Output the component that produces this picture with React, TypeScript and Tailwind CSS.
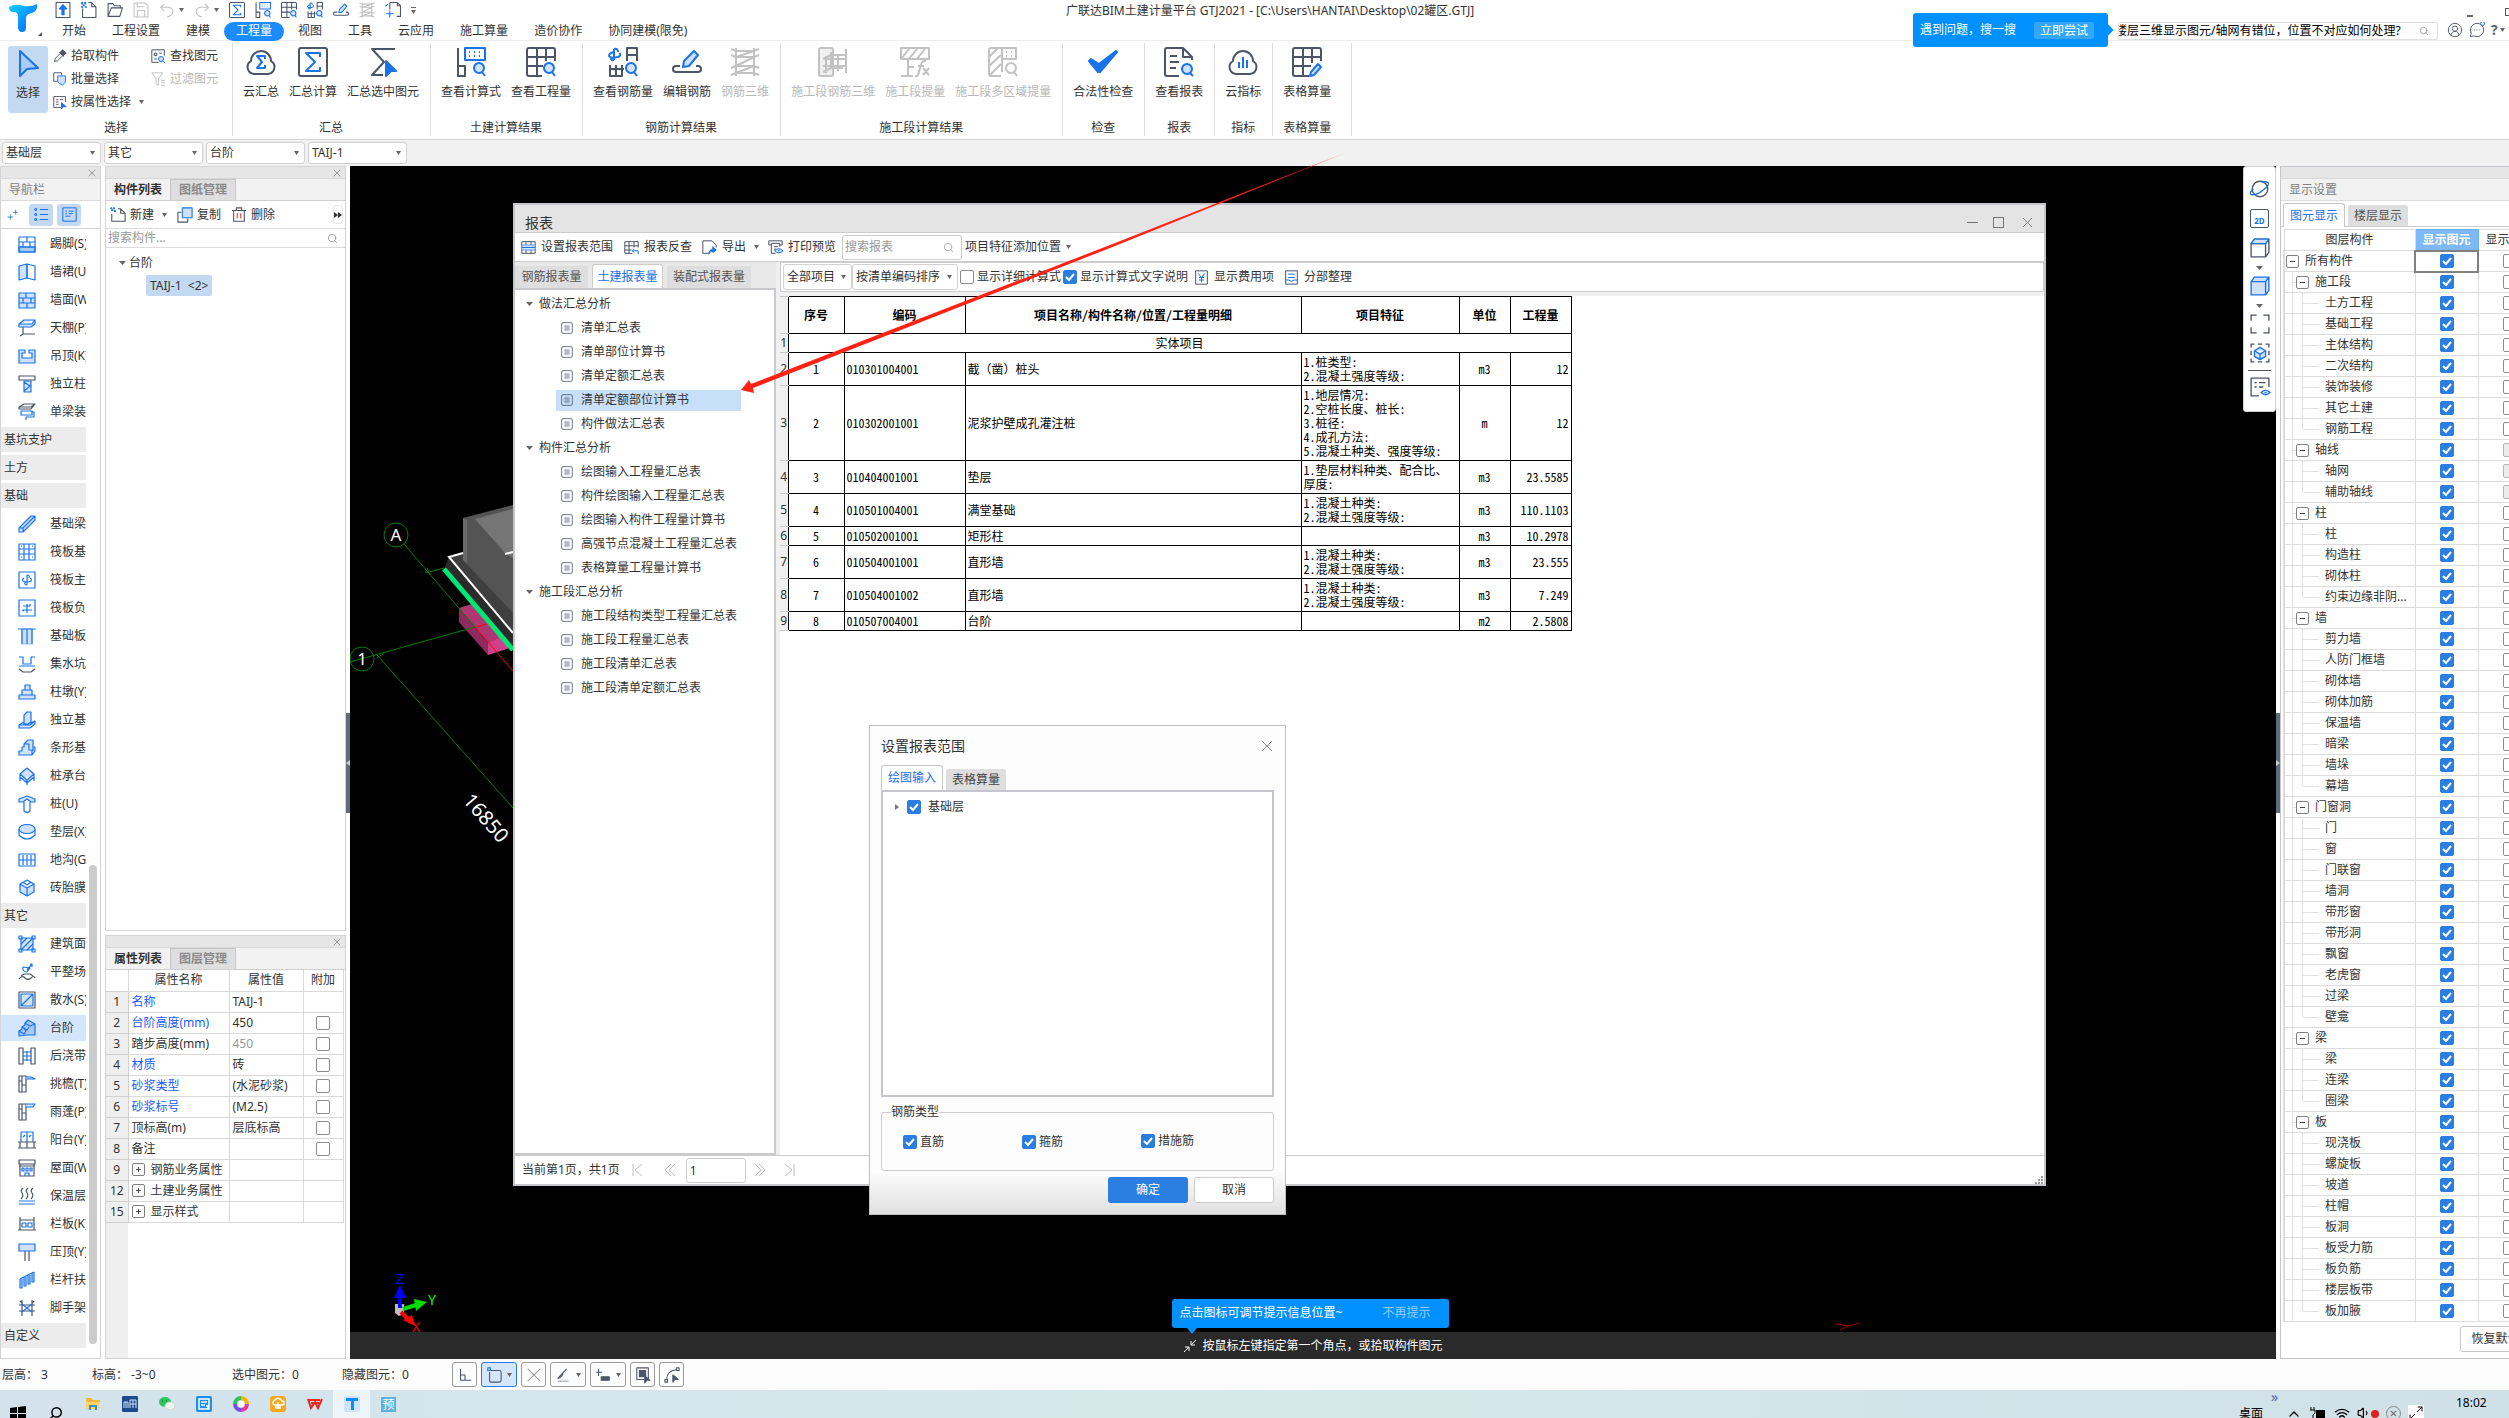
import type { ReactNode } from "react";
import clsx from "clsx";
import { ChevronUp, CircleUserRound, Maximize2, MessageCircleMore, Search, Volume1, Wifi, X } from "lucide-react";

const G = "#4c5468";
const B = "#1a73e8";
const F = "#cfe1fb";
const L = "#c2c2c2";
const N = "none";

// [path, stroke, fill]
type Layer = [string, string, string];

const ribbonIcons: Record<string, Layer[]> = {
  cloudSum: [
    ["M8 27A7 7 0 0 1 5 14A10 10 0 0 1 25 14A7 7 0 0 1 22 27Z", G, N],
    ["M19 12V9H11L16 15L11 21H19V18", B, N],
  ],
  sum: [
    ["M3 1H27Q29 1 29 3V27Q29 29 27 29H3Q1 29 1 27V3Q1 1 3 1Z", G, N],
    ["M22 10V6H8L17 15L8 24H22V20", B, N],
  ],
  sumPick: [
    ["M27 2H4L16 15L4 28H15", G, N],
    ["M18 14L28 24H23L18 29Z", B, B],
  ],
  formula: [
    ["M2 1V19H9V29H2V19", G, N],
    ["M9 1H29V13H9ZM13 5h1M18 5h1M23 5h1M13 9h1M18 9h1M23 9h1", B, N],
    ["M18 21A5 5 0 1 0 28 21A5 5 0 1 0 18 21M26 25L29 29", B, F],
  ],
  gridFind: [
    ["M16 29H3Q1 29 1 27V3Q1 1 3 1H27Q29 1 29 3V14M1 10H29M1 19H17M11 1V29M20 1V14", G, N],
    ["M18 21A5 5 0 1 0 28 21A5 5 0 1 0 18 21M26 25L29 29", B, F],
  ],
  rebarFind: [
    ["M19 14V1H29V14M19 8H29M2 18V29H14V18M2 22H16M8 18V29", G, N],
    ["M6 5Q1 6 1 9Q3 12 10 10Q13 9 12 6M6 2V13M6 2Q10 1 10 5M6 13Q3 14 3 11", B, N],
    ["M18 21A5 5 0 1 0 28 21A5 5 0 1 0 18 21M26 25L29 29", B, F],
  ],
  rebarEdit: [
    ["M8 19H4A3 3 0 0 0 4 25H26A3 3 0 0 0 26 19H24", G, N],
    ["M11 20L12 14L22 4L26 8L17 19Z", B, F],
  ],
  rebar3d: [["M6 1V29M24 1V29M1 2L6 4H24L29 2M1 8L6 10H24L29 8M1 21L6 19H24L29 21M1 28L6 26H24L29 28M6 10L24 4M6 19L24 10M6 26L24 19", L, N]],
  segRebar: [
    ["M3 1H13Q15 1 15 3V27Q15 29 13 29H3Q1 29 1 27V3Q1 1 3 1Z", L, "#f0f0f0"],
    ["M8 9V26M13 5V22M28 2V26M5 12H29M5 19H29M5 12L13 8H29M5 25L13 21H25M20 8V24", L, N],
  ],
  segFx: [
    ["M1 1H29V12H1ZM1 12L9 2M9 12L17 2M17 12L25 2M8 12V29M1 29H13M8 20H14", L, N],
    ["M26 14Q22 13 21 18L18 28Q17 30 15 29M18 19H24M23 21L29 28M29 21L23 28", L, N],
  ],
  segArea: [
    ["M13 29H3Q1 29 1 27V3Q1 1 3 1H28V12H14V1M14 12V25M1 10L10 1M1 19L13 8M2 28L13 17M18 5h1M23 5h1M18 9h1M23 9h1", L, N],
    ["M18 21A5 5 0 1 0 28 21A5 5 0 1 0 18 21M26 25L29 29", L, N],
  ],
  check: [["M1 14L3 12L11 17L28 4L29 5L12 25H10Z", B, B]],
  report: [
    ["M15 29H3Q1 29 1 27V3Q1 1 3 1H19L28 10V13M19 1V10H28M6 9H13M6 15H15M6 21H12", G, N],
    ["M18 22A5 5 0 1 0 28 22A5 5 0 1 0 18 22M26 26L29 29", B, F],
  ],
  cloudIdx: [
    ["M8 27A7 7 0 0 1 5 14A10 10 0 0 1 25 14A7 7 0 0 1 22 27Z", G, N],
    ["M11 15V21M15 10V21M19 13V21", B, N],
  ],
  gridEdit: [
    ["M17 29H3Q1 29 1 27V3Q1 1 3 1H27Q29 1 29 3V14M1 10H29M1 19H19M11 1V29M20 1V16", G, N],
    ["M18 29L19 25L26 17L29 20L22 28Z", B, F],
  ],
  upload: [
    ["M2 1H28V29H2Z", G, N],
    ["M15 5L22 13H17V24H13V13H8Z", B, B],
  ],
  newDoc: [
    ["M14 1H20L28 9V29H3V12M20 1V9H28", G, N],
    ["M1 1h2v2h-2zM7 1h2v2h-2zM4 5h2v2h-2zM1 9h2v1h-2zM8 9h2v1h-2z", B, B],
  ],
  folder: [["M2 27V3H11L14 7H25V11M2 27L8 11H29L24 27Z", G, N]],
  save: [["M2 2H23L28 7V28H2ZM8 28V16H22V28M8 2V9H20", L, N]],
  undo: [["M10 4L3 10L10 17M4 10H17Q27 11 26 19Q25 26 15 28", L, N]],
  redo: [["M20 4L27 10L20 17M26 10H13Q3 11 4 19Q5 26 15 28", L, N]],
  docPlus: [
    ["M9 1H23L29 7V27H22M9 1V14M23 1V7H29", G, N],
    ["M9 16V29M2 22H16M1 8L5 4", B, N],
  ],
};

const smallIcons: Record<string, Layer[]> = {
  skirt: [["M1 12H17V17H1Z", B, "#a9c9f3"], ["M1 2H17V17H1ZM1 7H17M1 12H17M9 2V7M5 7V12M12 7V12", B, N]],
  dado: [["M1 3L9 1V15L1 17Z", B, F], ["M9 1L17 3V17L9 15Z", B, N]],
  wallFace: [["M1 2H17V17H1ZM1 7H17M1 12H17M8 2V7M5 7V12M13 7V12M9 12V17", B, F]],
  canopy: [["M5 8V15M2 17L5 15H17", G, N], ["M1 5L6 1H17L14 5ZM1 5V8H13L17 5V1", B, F]],
  ceiling: [["M1 3H7V6H4V11H14V6H11V3H17V16H1Z", B, F]],
  column: [["M1 1H17V5H1Z", G, N], ["M6 6H13V17H6ZM6 7L12 11L6 16", B, F]],
  beamDeco: [["M1 4L6 1H17L13 4ZM1 4V6H13L17 1", G, N], ["M3 8H14V12H3ZM14 9H16V14H8V17", B, N]],
  fBeam: [["M1 13L13 1H17V5L5 17H1ZM1 13H5V17M5 13L17 1", B, F]],
  raft: [["M1 1H17V17H1ZM1 6H17M1 11H17M6 1V17M11 1V17M3 3h1M14 3h1M3 14h1M14 14h1", B, N]],
  raftMain: [["M1 1H17V17H1ZM9 4V14M6 7Q4 8 5 10Q9 12 13 10Q14 8 12 7M9 4Q12 4 11 7M9 14Q6 14 7 11", B, N]],
  raftNeg: [["M1 1H17V17H1ZM5 7H12V5M5 11H14M9 5V14M4 11L6 12", B, N]],
  fBand: [["M4 2H14V17H4Z", "#9fc3f3", F], ["M0 2H18M4 2V17M9 2V17M14 2V17", B, N]],
  pit: [["M1 2H5V9H13V2H17M1 11H17", B, N], ["M1 14L5 17H13L17 14", G, N]],
  pier: [["M7 2H12V7H7ZM4 7H14V12H4ZM1 12H17V16H1Z", B, F]],
  isoBase: [["M6 4L9 1H13V11L10 13H6ZM1 14L6 11M10 13L17 10V13L12 17H1V14H12L17 10", B, F]],
  strip: [["M6 5L10 1H15V12M6 5H11V11H14V16H1V12H4V8H6ZM14 16L17 12V8H15", B, F]],
  cap: [["M9 1L16 7L9 13L2 7ZM2 7V14M16 7V14M9 13V18M2 10L9 16L16 10", B, F]],
  pile: [["M1 4L9 1L17 4V7H13L9 4L5 7H1Z", B, F], ["M6 7V16Q9 19 12 16V7", B, N]],
  cushion: [["M1 6V12Q9 20 17 12V6", B, N], ["M1 6A8 4.500 0 1 0 17 6A8 4.500 0 1 0 1 6", B, F]],
  trench: [["M1 3H17V15H1ZM1 9H17M5 4V14M9 4V14M13 4V14", B, N]],
  brick: [["M9 1L16 5V13L9 17L2 13V5ZM2 5L9 9L16 5M9 9V17M5 3L9 6L13 3", B, F]],
  area: [["M3 3H15V15H3Z", B, F], ["M3 9L9 3M3 15L15 3M9 15L15 9M1 1H4V4H1ZM14 1H17V4H14ZM1 14H4V17H1ZM14 14H17V17H14Z", B, N]],
  level: [["M5 4Q4 9 9 9L12 5ZM9 7L14 1M12 1H14V4", B, N], ["M1 16Q4 12 7 15T13 15T17 15M3 13L6 11H12L15 13", G, N]],
  apron: [["M1 1H17V17H1Z", G, N], ["M3 3H15V15H3ZM3 15L15 3", B, F]],
  stairs: [["M1 12L4 10V8L7 6V4L10 1L17 5V16H8L1 17Z", B, "#a9c9f3"], ["M1 12L6 15L8 12L6 9M4 8L9 11L11 8M7 4L12 7L17 5", B, N]],
  lateStrip: [["M1 1H5V17H1ZM13 1H17V17H13Z", G, N], ["M5 5H13M5 9H13M5 13H13M9 4V14", B, N]],
  eave: [["M1 1H8V17H1ZM1 6H4M4 1V17M4 10H8", G, N], ["M8 2H13L17 4H8", B, F]],
  awning: [["M1 1H8V17H1ZM1 6H4M4 1V17M4 10H8", G, N], ["M8 1H17L15 4H8", B, F]],
  balcony: [["M0 11H18M2 11V17H16V11M9 11V17M0 17H18", G, N], ["M3 1H15V11M9 1V11M3 1V11M5 6L7 4M11 6L13 4", B, N]],
  roof: [["M1 1H17V5H1ZM2 5V17H16V5M1 7H17", G, N], ["M4 9H6V12H4ZM8 9H10V12H8ZM12 9H14V12H12ZM7 17V14H11V17", B, N]],
  heat: [["M5 1Q2 3 4 6T3 12M10 1Q7 3 9 6T8 12M15 1Q12 3 14 6T13 12", G, N], ["M1 14H17M1 17H17", B, N]],
  parapet: [["M2 2V15M16 2V15M0 15H18M2 5H16", G, N], ["M4 8H8V12H4ZM10 8H14V12H10Z", B, N]],
  coping: [["M7 8V18M11 8V18", G, N], ["M1 1H17V8H1Z", B, F]],
  rail: [["M2 8L16 1M2 8V17H4V8M6 6V15H8V6M10 4V13H12V4M14 2V11H16V1", B, F]],
  scaffold: [["M4 1V17M14 1V17M1 6H17M1 12H17M2 2L4 4M16 2L14 4", G, N], ["M4 5L14 13M14 5L4 13", B, N]],
  pick: [["M10 5L13 8L6 15L2 16L3 12Z", G, N], ["M12 1L17 5L13 9L9 5ZM8 4L14 10", G, G]],
  batch: [["M1 1H11V4M1 1V12H5", G, N], ["M7 5H16V13L12 17L6 13V5Z", B, F]],
  byAttr: [["M10 16H1V2H16V9M4 6H7M9 6H13M4 9H7M4 12H7", G, N], ["M11 10L17 15H13L11 18Z", B, B]],
  findEl: [["M9 16H1V1H16V8M4 5H7V8H4ZM10 5H13M4 12H7", G, N], ["M9 12A3 3 0 1 0 15 12A3 3 0 1 0 9 12M14 14L17 17", B, F]],
  filter: [["M1 1H14L9 8V16L6 14V8ZM12 10H17M12 13H17M12 16H17", L, N]],
  range: [["M1 2H17V16H1ZM6 2V16M12 2V16", G, N], ["M1 6H17V12H1Z", "#5a9bf0", F], ["M1 9H17", B, N]],
  trace: [["M10 16H1V2H17V9M1 7H17M1 12H9M6 2V16M12 2V9", G, N], ["M17 17V13H10M12 11L10 13L12 15", B, N]],
  exportIc: [["M8 16H1V1H12L17 6V9", G, N], ["M8 17Q9 11 13 11V8L17 12L13 15V13Q10 13 8 17", B, B]],
  print: [["M1 6V1H17V6H13M1 6H4M4 4H14V8M4 4V16H9M7 8H12M7 11H10", G, N], ["M8 13Q13 8 18 13Q13 18 8 13ZM12 13h2", B, F]],
  doc: [["M3 1H15Q17 1 17 3V15Q17 17 15 17H3Q1 17 1 15V3Q1 1 3 1ZM5 6H13M5 9H13M5 12H13", G, N]],
  fee: [["M2 1H16V17H2Z", G, N], ["M5 4L9 9L13 4M9 9V15M6 9H12M6 12H12", B, N]],
  arrange: [["M2 1H16V17H2Z", G, N], ["M5 5H13M5 9H13M2 12H6Q9 15 12 12H16", B, N]],
  newItem: [["M9 2H12L17 7V16H2V8M12 2V7H17", G, N], ["M1 1h1v1h-1zM4 1h1v1h-1zM2 3h1v1h-1zM5 4h1v1h-1z", B, B]],
  copy: [["M5 6H1V17H12V13", G, N], ["M6 1H17V12H6Z", B, F]],
  trash: [["M3 4V16H15V4M1 4H17M6 4V1H12V4", G, N], ["M7 7V13M11 7V13", "#e03030", N]],
  stars: [["M5 8V16M1 12H9M13 1V8M9 5H16", B, N]],
  list: [["M7 3H17M7 9H17M7 15H17M1 2H3V4H1ZM1 8H3V10H1ZM1 14H3V16H1Z", B, N]],
  card: [["M1 1H17V17H1ZM4 5H6M8 5H14M4 8H6M8 8H13M4 11H10", B, N]],
  orbit: [["M2 9A7 7 0 1 0 16 9A7 7 0 1 0 2 9", G, N], ["M3 9Q-1 13 1 14Q6 15 13 9Q18 5 16 3Q14 2 11 3", B, N]],
  cube: [["M1 5L4 1H17V13L14 17H1ZM1 5H14V17M14 5L17 1", G, N], ["M1 5L4 1H17L14 5Z", B, F]],
  cubeOn: [["M1 5L4 1H17V13L14 17H1ZM1 5H14V17M14 5L17 1", B, F]],
  frame: [["M1 6V1H6M12 1H17V6M17 12V17H12M6 17H1V12", G, N]],
  cubeDash: [["M1 4V1H4M7 1H11M14 1H17V4M17 7V11M17 14V17H14M11 17H7M4 17H1V14M1 11V7", G, N], ["M9 4L14 7V12L9 15L4 12V7ZM4 7L9 10L14 7M9 10V15", B, F]],
  listEye: [["M8 17H1V1H17V9M4 5H6M8 5H14M4 9H6M8 9H12", G, N], ["M10 14Q14 10 18 14Q14 18 10 14ZM13 14h2", B, N]],
  angle: [["M4 2V15H16M4 9H9V15", G, N]],
  boxSel: [["M5 4H15Q17 4 17 6V15Q17 17 15 17H6Q4 17 4 15V6", G, N], ["M2 1H5V4H2Z", B, N]],
  cross: [["M2 2L16 16M16 2L2 16", "#9a9a9a", N]],
  slope: [["M3 13L13 2M3 13Q8 12 9 7", G, N], ["M3 16H15", "#9aa0aa", N]],
  plusBox: [["M1 6H8M4 2V10", G, N], ["M7 11H16V15H7Z", G, G]],
  layers: [["M2 1H15V14H2Z", G, N], ["M5 4H12V11H5Z", G, G], ["M11 10L17 15H13L11 18Z", G, G]],
  arc: [["M3 14Q3 4 14 3M1 14H4V17H1ZM14 1H17V4H14Z", G, N], ["M10 9L16 14H12L10 17Z", G, G]],
};

const Glyph = ({ layers, box, size, width }: { layers: Layer[]; box: number; size: number; width: number }) => (
  <svg viewBox={`0 0 ${box} ${box}`} width={size} height={size} strokeWidth={width} strokeLinejoin="round" className="shrink-0 overflow-visible" aria-hidden="true">
    {layers.map(([d, stroke, fill], i) => (
      <path key={i} d={d} stroke={stroke} fill={fill} />
    ))}
  </svg>
);

const Big = ({ name, size = 30 }: { name: string; size?: number }) => <Glyph layers={ribbonIcons[name]} box={30} size={size} width={2} />;

const Small = ({ name, size = 18 }: { name: string; size?: number }) => <Glyph layers={smallIcons[name]} box={18} size={size} width={1.2} />;

const Caret = ({ className = "w-[5px]" }: { className?: string }) => (
  <svg viewBox="0 0 6 4" preserveAspectRatio="none" className={clsx("h-1 shrink-0", className)} aria-hidden="true">
    <path d="M0 0H6L3 4Z" fill="#666" />
  </svg>
);

const Check = ({ label, checked = false, muted = false, showLabel = false }: { label: string; checked?: boolean; muted?: boolean; showLabel?: boolean }) => (
  <label className="inline-flex items-center gap-[3px] align-middle">
    <span className="relative block size-[14px] shrink-0">
      <input
        type="checkbox"
        aria-label={label}
        defaultChecked={checked}
        className={clsx(
          "peer block size-[14px] appearance-none rounded-[2px] border checked:border-[#2a7de1] checked:bg-[#2a7de1]",
          muted ? "border-[#b5b5b5] bg-[#ececec]" : "border-[#8c8c8c] bg-white",
        )}
      />
      <svg viewBox="0 0 14 14" className="pointer-events-none absolute inset-0 hidden peer-checked:block" aria-hidden="true">
        <path d="M3 7L6 10L11 4" fill="none" stroke="#fff" strokeWidth="2" />
      </svg>
    </span>
    {showLabel ? <span>{label}</span> : null}
  </label>
);

const Combo = ({ label, value, className }: { label: string; value: string; className: string }) => (
  <span className={clsx("relative flex items-center rounded-[3px] border border-[#d2d2d2] bg-white", className)}>
    <select aria-label={label} className="h-full w-full appearance-none bg-transparent pl-[3px] pr-3 outline-none">
      <option>{value}</option>
    </select>
    <Caret className="pointer-events-none absolute right-[5px] w-[5px]" />
  </span>
);

const menu = ["开始", "工程设置", "建模", "工程量", "视图", "工具", "云应用", "施工算量", "造价协作", "协同建模(限免)"];

const Header = () => (
  <header className="relative flex h-[41px] border-b border-[#ececec] bg-white">
    <div className="flex w-12 items-start pl-2 pt-1">
      <svg viewBox="0 0 30 30" className="size-[30px]" aria-hidden="true">
        <defs>
          <linearGradient id="logo" x1="0" y1="0" x2="1" y2="1">
            <stop offset="0" stopColor="#10d4ff" />
            <stop offset="0.600" stopColor="#0a8dff" />
            <stop offset="1" stopColor="#0a5cff" />
          </linearGradient>
        </defs>
        <path d="M1 3Q8 -1 15 2Q24 3 29 0Q30 7 24 9Q18 10 18 14V24Q18 28 14 28Q10 28 10 23V12Q10 8 5 8Q1 8 1 3Z" fill="url(#logo)" />
      </svg>
      <svg viewBox="0 0 4 4" className="mt-7 size-1 shrink-0" aria-hidden="true">
        <path d="M4 0V4H0Z" fill="#555" />
      </svg>
    </div>
    <div className="flex-1">
      <div className="flex h-5 items-center gap-[10px] pl-[7px]">
        <Big name="upload" size={16} />
        <Big name="newDoc" size={16} />
        <Big name="folder" size={16} />
        <Big name="save" size={16} />
        <span className="flex items-center gap-1"><Big name="undo" size={16} /><Caret /></span>
        <span className="flex items-center gap-1"><Big name="redo" size={16} /><Caret /></span>
        <Big name="sum" size={16} />
        <Big name="formula" size={16} />
        <Big name="gridFind" size={16} />
        <Big name="rebarFind" size={16} />
        <Big name="rebarEdit" size={16} />
        <Big name="rebar3d" size={16} />
        <Big name="docPlus" size={16} />
        <span className="flex flex-col items-center gap-[2px]"><i className="h-px w-[5px] bg-[#666]" /><Caret /></span>
      </div>
      <nav className="flex h-[22px] items-center gap-[2px] pl-[2px]">
        {menu.map((m) => (
          <a
            key={m}
            href="#"
            className={clsx("flex h-[19px] items-center rounded-full px-3 leading-none", m === "工程量" && "bg-[#1a8cff] text-white")}
          >
            {m}
          </a>
        ))}
      </nav>
    </div>
    <h1 className="absolute left-[1066px] top-0 h-[22px] leading-[22px]">广联达BIM土建计量平台 GTJ2021 - [C:\Users\HANTAI\Desktop\02罐区.GTJ]</h1>
    <div className="flex items-end">
      <div className="relative z-10 -mb-[7px] mr-[10px] flex h-[34px] items-center gap-[18px] rounded-[3px] bg-[#0091ff] pl-[7px] pr-[14px] text-white">
        遇到问题，搜一搜
        <button className="h-[17px] rounded-[2px] bg-[#33a7ff] px-[6px] leading-[17px]">立即尝试</button>
        <i className="absolute -right-1 top-[13px] size-2 rotate-45 bg-[#0091ff]" />
      </div>
      <div className="flex h-[18px] w-[320px] items-center rounded-[2px] border border-[#dedede]">
        <input aria-label="搜索问题" defaultValue="楼层三维显示图元/轴网有错位，位置不对应如何处理?" className="h-4 min-w-0 flex-1 -indent-1 text-black outline-none" />
        <Search className="mr-2 size-[10px] text-[#999]" />
      </div>
      <div className="mb-[2px] flex w-[71px] items-center gap-[6px] overflow-hidden pl-[9px] text-[#5a6270]">
        <CircleUserRound className="size-4 shrink-0" strokeWidth={1.5} />
        <span className="relative">
          <MessageCircleMore className="size-4 shrink-0" strokeWidth={1.5} />
          <i className="absolute -top-px right-0 size-[5px] rounded-full border border-[#1a73e8] bg-white" />
        </span>
        <span className="flex items-center gap-[2px] text-sm font-bold leading-4">?<Caret /></span>
      </div>
    </div>
    <div className="absolute right-0 top-[7px] flex items-center gap-8 overflow-hidden">
      <i className="mt-2 h-[2px] w-[6px] bg-[#666]" />
      <i className="-mr-1 size-2 border border-[#555]" />
    </div>
  </header>
);

const groups: { title: string; items: [string, string, boolean?][]; extra?: boolean }[] = [
  { title: "汇总", items: [["云汇总", "cloudSum"], ["汇总计算", "sum"], ["汇总选中图元", "sumPick"]] },
  { title: "土建计算结果", items: [["查看计算式", "formula"], ["查看工程量", "gridFind"]] },
  { title: "钢筋计算结果", items: [["查看钢筋量", "rebarFind"], ["编辑钢筋", "rebarEdit"], ["钢筋三维", "rebar3d", true]] },
  { title: "施工段计算结果", items: [["施工段钢筋三维", "segRebar", true], ["施工段提量", "segFx", true], ["施工段多区域提量", "segArea", true]] },
  { title: "检查", items: [["合法性检查", "check"]] },
  { title: "报表", items: [["查看报表", "report"]] },
  { title: "指标", items: [["云指标", "cloudIdx"]] },
  { title: "表格算量", items: [["表格算量", "gridEdit"]], extra: true },
];

const Ribbon = () => (
  <section className="flex h-[99px] border-b border-[#d6d6d6] bg-white pb-[3px] pt-[2px]">
    <div className="flex w-[233px] flex-col border-r border-[#dcdcdc]">
      <div className="flex pl-2 pt-[3px]">
        <button className="flex h-[67px] w-10 flex-col items-center gap-[7px] rounded-[3px] bg-[#c3d9f1] pt-[2px] leading-4">
          <svg viewBox="0 0 30 30" className="size-[30px]" aria-hidden="true">
            <path d="M7 3L25 20L14 21L7 28Z" fill="#a9ccf7" stroke={B} strokeWidth="2" strokeLinejoin="round" />
          </svg>
          选择
        </button>
        <div className="flex w-[98px] flex-col gap-[5px] pl-[5px] pt-px">
          <button className="flex h-[18px] items-center gap-1 whitespace-nowrap"><Small name="pick" size={14} />拾取构件</button>
          <button className="flex h-[18px] items-center gap-1 whitespace-nowrap"><Small name="batch" size={14} />批量选择</button>
          <button className="flex h-[18px] items-center gap-1 whitespace-nowrap"><Small name="byAttr" size={14} />按属性选择<Caret className="ml-1 w-[5px]" /></button>
        </div>
        <div className="flex flex-col gap-[5px] pl-[5px] pt-px">
          <button className="flex h-[18px] items-center gap-1"><Small name="findEl" size={15} />查找图元</button>
          <button disabled className="flex h-[18px] items-center gap-1 text-[#b8b8b8]"><Small name="filter" size={15} />过滤图元</button>
        </div>
      </div>
      <p className="mt-auto text-center leading-4">选择</p>
    </div>
    {groups.map((g) => (
      <div key={g.title} className={clsx("flex flex-col border-r border-[#dcdcdc] pl-[10px]", g.extra ? "pr-5" : "pr-[11px]")}>
        <div className="flex gap-[10px] pt-1">
          {g.items.map(([label, icon, off]) => (
            <button key={label} disabled={off} className={clsx("flex flex-col items-center gap-[7px] whitespace-nowrap leading-4", off && "text-[#b8b8b8]")}>
              <Big name={icon} />
              {label}
            </button>
          ))}
        </div>
        <p className="mt-auto text-center leading-4">{g.title}</p>
      </div>
    ))}
  </section>
);

const nav: [string, string?][] = [
  ["踢脚(S)", "skirt"], ["墙裙(U)", "dado"], ["墙面(W)", "wallFace"], ["天棚(P)", "canopy"], ["吊顶(K)", "ceiling"], ["独立柱", "column"], ["单梁装", "beamDeco"],
  ["基坑支护"], ["土方"], ["基础"],
  ["基础梁", "fBeam"], ["筏板基", "raft"], ["筏板主", "raftMain"], ["筏板负", "raftNeg"], ["基础板", "fBand"], ["集水坑", "pit"], ["柱墩(Y)", "pier"],
  ["独立基", "isoBase"], ["条形基", "strip"], ["桩承台", "cap"], ["桩(U)", "pile"], ["垫层(X)", "cushion"], ["地沟(G)", "trench"], ["砖胎膜", "brick"],
  ["其它"],
  ["建筑面", "area"], ["平整场", "level"], ["散水(S)", "apron"], ["台阶", "stairs"], ["后浇带", "lateStrip"], ["挑檐(T)", "eave"], ["雨蓬(P)", "awning"],
  ["阳台(Y)", "balcony"], ["屋面(W)", "roof"], ["保温层", "heat"], ["栏板(K)", "parapet"], ["压顶(Y)", "coping"], ["栏杆扶", "rail"], ["脚手架", "scaffold"],
  ["自定义"],
];

const Grip = () => (
  <div className="flex h-3 shrink-0 items-center justify-end border-b border-[#d8d8d8] bg-[#e6e6e6] pr-[2px]">
    <X className="size-3 text-[#999]" />
  </div>
);

const NavPanel = () => (
  <aside className="flex w-[101px] shrink-0 flex-col border border-[#d4d4d4] bg-white">
    <Grip />
    <h2 className="flex h-[22px] shrink-0 items-center border-b border-[#dcdcdc] bg-[#f2f2f2] pl-2 text-[#808080]">导航栏</h2>
    <div className="flex h-7 shrink-0 items-center gap-1 border-b border-[#d4d4d4] pl-[6px]">
      <button aria-label="收起" className="mr-[6px]"><Small name="stars" size={12} /></button>
      <button aria-label="列表" className="grid h-[22px] w-6 place-items-center rounded-[3px] bg-[#c3d9f1]"><Small name="list" size={15} /></button>
      <button aria-label="卡片" className="grid h-[22px] w-6 place-items-center rounded-[3px] bg-[#c3d9f1]"><Small name="card" size={15} /></button>
    </div>
    <div className="flex flex-1 justify-between pr-[3px]">
      <ul className="flex w-[85px] flex-col gap-[2px] overflow-hidden pt-[2px]">
        {nav.map(([label, icon], i) => (
          <li
            key={i}
            className={clsx("flex h-[26px] items-center overflow-hidden whitespace-nowrap", !icon && "border-b border-white bg-[#ececec] pl-[3px]", icon && "pl-[17px]", label === "台阶" && "bg-[#d3e6fd]")}
          >
            {icon ? <span className="mr-[14px]"><Small name={icon} /></span> : null}
            {label}
          </li>
        ))}
      </ul>
      <div className="flex w-2 flex-col justify-end pb-[14px]">
        <i className="h-[43%] rounded-full bg-[#cbcbcb]" />
      </div>
    </div>
  </aside>
);

const PanelTabs = ({ on, off }: { on: string; off: string }) => (
  <div className="flex h-[22px] shrink-0 border-b border-[#cfcfcf] bg-[#f2f2f2] font-bold">
    <button className="w-16 bg-[#f2f2f2]">{on}</button>
    <button className="w-[66px] border-x border-t border-[#c6c6c6] bg-[#dedede] text-[#8a8a8a]">{off}</button>
  </div>
);

const props: { n: number; name: string; value?: string; blue?: boolean; gray?: boolean; box?: boolean; group?: boolean }[] = [
  { n: 1, name: "名称", value: "TAIJ-1", blue: true },
  { n: 2, name: "台阶高度(mm)", value: "450", blue: true, box: true },
  { n: 3, name: "踏步高度(mm)", value: "450", gray: true, box: true },
  { n: 4, name: "材质", value: "砖", blue: true, box: true },
  { n: 5, name: "砂浆类型", value: "(水泥砂浆)", blue: true, box: true },
  { n: 6, name: "砂浆标号", value: "(M2.5)", blue: true, box: true },
  { n: 7, name: "顶标高(m)", value: "层底标高", box: true },
  { n: 8, name: "备注", box: true },
  { n: 9, name: "钢筋业务属性", group: true },
  { n: 12, name: "土建业务属性", group: true },
  { n: 15, name: "显示样式", group: true },
];

const Expander = ({ open }: { open: boolean }) => (
  <svg viewBox="0 0 13 13" className="size-[13px] shrink-0" aria-hidden="true">
    <rect x="0.500" y="0.500" width="12" height="12" rx="1.500" fill="#fff" stroke="#808080" />
    <path d={open ? "M4 6.500H9" : "M4 6.500H9M6.500 4V9"} stroke="#444" />
  </svg>
);

const Components = () => (
  <div className="ml-1 flex w-[241px] shrink-0 flex-col gap-1">
    <section className="flex flex-1 flex-col border border-[#d4d4d4] bg-white">
      <Grip />
      <PanelTabs on="构件列表" off="图纸管理" />
      <div className="flex h-7 shrink-0 items-center border-b border-[#dcdcdc] pl-1">
        <button className="flex items-center gap-1"><Small name="newItem" size={16} />新建<Caret className="ml-1 w-[5px]" /></button>
        <button className="ml-[10px] flex items-center gap-1"><Small name="copy" size={16} />复制</button>
        <button className="ml-[10px] flex items-center gap-1"><Small name="trash" size={16} />删除</button>
        <button aria-label="更多" className="ml-auto mr-[2px] flex h-[19px] w-[10px] items-center justify-center rounded-[3px] border border-[#e6e6e6]">
          <svg viewBox="0 0 8 6" className="h-[6px] w-2 shrink-0"><path d="M0 0L4 3L0 6ZM4 0L8 3L4 6Z" fill="#333" /></svg>
        </button>
      </div>
      <div className="flex h-[19px] shrink-0 items-center border-b border-[#dcdcdc] px-[2px]">
        <input aria-label="搜索构件" placeholder="搜索构件..." className="h-4 min-w-0 flex-1 outline-none placeholder:text-[#999]" />
        <Search className="mr-[5px] size-[11px] text-[#999]" />
      </div>
      <div className="pl-[13px] pt-[3px]">
        <p className="flex h-6 items-center gap-[3px]"><Caret className="w-[7px]" />台阶</p>
        <p className="ml-[27px] inline-block h-[21px] rounded-[2px] bg-[#c3d9f1] px-1 leading-[21px]">TAIJ-1 &nbsp;&lt;2&gt;</p>
      </div>
    </section>
    <section className="flex h-[424px] shrink-0 flex-col border border-[#d4d4d4] bg-white">
      <Grip />
      <PanelTabs on="属性列表" off="图层管理" />
      <table className="w-[237px] table-fixed border-collapse">
        <colgroup><col className="w-[22px]" /><col className="w-[101px]" /><col className="w-[74px]" /><col className="w-10" /></colgroup>
        <thead>
          <tr className="h-[21px] leading-4">
            <th />
            {["属性名称", "属性值", "附加"].map((h) => (
              <th key={h} scope="col" className="border border-t-0 border-[#d9d9d9] p-0 text-center font-normal">{h}</th>
            ))}
          </tr>
        </thead>
        <tbody>
          {props.map((p) => (
            <tr key={p.n} className="h-[21px] leading-4">
              <td className="border border-l-0 border-[#d0d0d0] bg-[#efefef] p-0 text-center">{p.n}</td>
              <td className={clsx("whitespace-nowrap border border-[#d9d9d9] p-0 pl-[3px]", p.blue && "text-[#1a5cff]")}>
                <span className="flex items-center gap-[6px]">{p.group ? <Expander open={false} /> : null}{p.name}</span>
              </td>
              <td className={clsx("whitespace-nowrap border border-[#d9d9d9] p-0 pl-[3px]", p.gray && "text-[#999]")}>{p.value}</td>
              <td className="border border-[#d9d9d9] p-0 text-center leading-none">{p.box ? <Check label={`附加 ${p.name}`} /> : null}</td>
            </tr>
          ))}
        </tbody>
      </table>
      <div className="w-[22px] flex-1 bg-[#efefef]" />
    </section>
  </div>
);

// 3D view: axes, slab and the coordinate triad
const Scene = () => (
  <svg className="absolute inset-0 size-full" aria-hidden="true">
    <path d="M113 352L163 339V470L113 396Z" fill="#545454" />
    <path d="M125 353L163 343V392L155 387Z" fill="#757575" />
    <path d="M113 352L117 354V398L113 395Z" fill="#6a6a6a" />
    <path d="M99 391L113 387V394L163 447V467Z" fill="#3f3f3f" />
    <path d="M94 403L99 391L163 467V484Z" fill="#2b2b2b" />
    <path d="M109 442L122 438L160 478L138 477Z" fill="#b03573" />
    <path d="M109 442L138 477V489L109 456Z" fill="#8f2a5f" />
    <path d="M138 477L150 472L160 482L138 489Z" fill="#d0418b" />
    <path d="M113 387L99 391L163 467M155 388L163 386" fill="none" stroke="#fff" strokeWidth="2" />
    <path d="M94 403L163 484" stroke="#00e676" strokeWidth="5" />
    <g fill="none" stroke="#008000">
      <circle cx="46" cy="369" r="12" />
      <circle cx="12" cy="493" r="12" />
      <path d="M54 378L125 461L0 496M27 489L163 642M94 402L75 407M77 402L80 409M34 487L27 492" />
    </g>
    <path d="M163 505L125 461L137 458" fill="none" stroke="#f00" />
    <g fill="#fff" fontSize="17" textAnchor="middle">
      <text x="46" y="375">A</text>
      <text x="12" y="499">1</text>
      <text x="136" y="659" fontSize="20" transform="rotate(49 136 652)">16850</text>
    </g>
    <path d="M45 1138H54V1148L49 1150L45 1147Z" fill="#bbb" />
    <path d="M50 1142V1130" stroke="#00f" strokeWidth="4" />
    <path d="M44 1132L50 1119L56 1132Z" fill="#00f" />
    <path d="M53 1143L66 1139" stroke="#0d0" strokeWidth="4" />
    <path d="M64 1133L77 1136L66 1145Z" fill="#0d0" />
    <path d="M51 1146L58 1153" stroke="#f00" strokeWidth="4" />
    <path d="M53 1154L62 1149L65 1160Z" fill="#f00" />
    <g fontSize="14" textAnchor="middle">
      <text x="50" y="1118" fill="#00f">Z</text>
      <text x="82" y="1139" fill="#0f0">Y</text>
      <text x="66" y="1166" fill="#f00">X</text>
    </g>
    <path d="M1486 1158L1498 1160L1510 1157M1490 1164L1498 1160" fill="none" stroke="#a00" />
  </svg>
);

const reportTree: { title: string; items: string[] }[] = [
  { title: "做法汇总分析", items: ["清单汇总表", "清单部位计算书", "清单定额汇总表", "清单定额部位计算书", "构件做法汇总表"] },
  { title: "构件汇总分析", items: ["绘图输入工程量汇总表", "构件绘图输入工程量汇总表", "绘图输入构件工程量计算书", "高强节点混凝土工程量汇总表", "表格算量工程量计算书"] },
  { title: "施工段汇总分析", items: ["施工段结构类型工程量汇总表", "施工段工程量汇总表", "施工段清单汇总表", "施工段清单定额汇总表"] },
];

const rows: { code: string; name: string; feats: string[]; unit: string; qty: string }[] = [
  { code: "010301004001", name: "截（凿）桩头", feats: ["1.桩类型:", "2.混凝土强度等级:"], unit: "m3", qty: "12" },
  { code: "010302001001", name: "泥浆护壁成孔灌注桩", feats: ["1.地层情况:", "2.空桩长度、桩长:", "3.桩径:", "4.成孔方法:", "5.混凝土种类、强度等级:"], unit: "m", qty: "12" },
  { code: "010404001001", name: "垫层", feats: ["1.垫层材料种类、配合比、", "厚度:"], unit: "m3", qty: "23.5585" },
  { code: "010501004001", name: "满堂基础", feats: ["1.混凝土种类:", "2.混凝土强度等级:"], unit: "m3", qty: "110.1103" },
  { code: "010502001001", name: "矩形柱", feats: [], unit: "m3", qty: "10.2978" },
  { code: "010504001001", name: "直形墙", feats: ["1.混凝土种类:", "2.混凝土强度等级:"], unit: "m3", qty: "23.555" },
  { code: "010504001002", name: "直形墙", feats: ["1.混凝土种类:", "2.混凝土强度等级:"], unit: "m3", qty: "7.249" },
  { code: "010507004001", name: "台阶", feats: [], unit: "m2", qty: "2.5808" },
];

const Idx = ({ children }: { children?: ReactNode }) => (
  <td className="border-y border-[#c8c8c8] bg-[#f0f0f0] p-0 text-center font-['Noto_Sans','Noto_Sans_CJK_SC',sans-serif] text-[#333]">{children}</td>
);

const cell = "border border-black px-[2px] py-[2px]";

const ReportTable = () => (
  <table className="w-[791px] table-fixed border-collapse font-['Noto_Sans_Mono_CJK_SC','Noto_Sans_CJK_SC',monospace] leading-[14px] text-black">
    <colgroup>
      <col className="w-2" /><col className="w-[56px]" /><col className="w-[121px]" /><col className="w-[336px]" /><col className="w-[158px]" /><col className="w-[51px]" /><col className="w-[61px]" />
    </colgroup>
    <thead>
      <tr className="h-[37px]">
        <Idx />
        {["序号", "编码", "项目名称/构件名称/位置/工程量明细", "项目特征", "单位", "工程量"].map((h) => (
          <th key={h} scope="col" className="border border-black p-0 text-center font-bold">{h}</th>
        ))}
      </tr>
    </thead>
    <tbody>
      <tr>
        <Idx>1</Idx>
        <td colSpan={6} className={clsx(cell, "text-center")}>实体项目</td>
      </tr>
      {rows.map((r, i) => (
        <tr key={r.code}>
          <Idx>{i + 2}</Idx>
          <td className={clsx(cell, "text-center")}>{i + 1}</td>
          <td className={cell}>{r.code}</td>
          <td className={cell}>{r.name}</td>
          <td className={clsx(cell, "whitespace-nowrap")}>{r.feats.map((f) => <p key={f}>{f}</p>)}</td>
          <td className={clsx(cell, "text-center")}>{r.unit}</td>
          <td className={clsx(cell, "text-right")}>{r.qty}</td>
        </tr>
      ))}
    </tbody>
  </table>
);

const Pager = ({ d }: { d: string }) => (
  <svg viewBox="0 0 12 14" className="h-[14px] w-3" aria-hidden="true">
    <path d={d} fill="none" stroke="currentColor" />
  </svg>
);

const ReportWindow = () => (
  <section className="absolute bottom-[173px] left-[163px] right-[230px] top-[37px] flex flex-col border-2 border-[#c4c6c9] bg-white">
    <div className="flex h-7 shrink-0 items-center justify-between border-b border-[#ccc] bg-[#e4e4e4] pl-[10px] pr-2 pt-2">
      <h2 className="text-sm leading-5">报表</h2>
      <div className="flex items-center gap-[15px] text-[#777]">
        <button aria-label="最小化" className="h-px w-[11px] bg-[#777]" />
        <button aria-label="最大化" className="size-[11px] border border-[#777]" />
        <button aria-label="关闭"><X className="size-[17px]" strokeWidth={1.3} /></button>
      </div>
    </div>
    <div className="flex h-[29px] shrink-0 items-center border-b border-[#ccc] pl-[6px]">
      <button className="flex items-center gap-[5px]"><Small name="range" size={15} />设置报表范围</button>
      <button className="ml-[11px] flex items-center gap-[5px]"><Small name="trace" size={15} />报表反查</button>
      <button className="ml-[10px] flex items-center gap-[5px]"><Small name="exportIc" size={15} />导出<Caret className="ml-[3px] w-[5px]" /></button>
      <button className="ml-[9px] flex items-center gap-[5px]"><Small name="print" size={15} />打印预览</button>
      <div className="ml-[6px] flex h-[25px] w-[120px] items-center rounded-[3px] border border-[#ccc] pl-[2px] pr-[7px]">
        <input aria-label="搜索报表" placeholder="搜索报表" className="min-w-0 flex-1 outline-none placeholder:text-[#999]" />
        <Search className="size-[11px] text-[#aaa]" />
      </div>
      <button className="ml-[3px] flex items-center gap-[5px]">项目特征添加位置<Caret /></button>
    </div>
    <div className="flex flex-1 bg-[#f0f0f0]">
      <div className="flex w-[261px] shrink-0 flex-col">
        <div className="flex h-[26px] items-end gap-1 bg-[#e9e9e9] text-[#555]">
          <button className="h-[22px] w-[73px] bg-[#dedede]">钢筋报表量</button>
          <button className="h-6 w-[71px] rounded-t-[3px] border border-b-0 border-[#ccc] bg-white text-[#1a73e8]">土建报表量</button>
          <button className="h-[22px] w-[84px] bg-[#dedede]">装配式报表量</button>
        </div>
        <div className="flex-1 border-2 border-l-0 border-[#c9cacd] bg-white pt-[2px]">
          {reportTree.map((g) => (
            <div key={g.title}>
              <p className="flex h-6 items-center gap-[6px] pl-[11px]"><Caret className="w-[7px]" />{g.title}</p>
              <ul>
                {g.items.map((t) => (
                  <li key={t} className="flex h-6 items-center pl-[41px]">
                    <a href="#" className={clsx("flex h-[21px] w-[185px] items-center gap-2 whitespace-nowrap pl-[5px]", t === "清单定额部位计算书" && "bg-[#c7dff9]")}>
                      <Small name="doc" size={12} />
                      {t}
                    </a>
                  </li>
                ))}
              </ul>
            </div>
          ))}
        </div>
      </div>
      <div className="ml-1 flex flex-1 flex-col">
        <div className="flex h-[30px] shrink-0 items-center border border-[#ccc] bg-white pl-[2px]">
          <Combo label="项目" value="全部项目" className="h-[26px] w-[69px]" />
          <Combo label="排序" value="按清单编码排序" className="mr-[2px] h-[26px] w-[106px]" />
          <Check label="显示详细计算式" showLabel />
          <span className="ml-[2px]"><Check label="显示计算式文字说明" checked showLabel /></span>
          <button className="ml-[6px] flex items-center gap-[5px]"><Small name="fee" size={15} />显示费用项</button>
          <button className="ml-[10px] flex items-center gap-[5px]"><Small name="arrange" size={15} />分部整理</button>
        </div>
        <div className="mt-1 flex-1 bg-white">
          <ReportTable />
        </div>
      </div>
    </div>
    <footer className="flex h-[29px] shrink-0 items-center border-t border-[#ccc] pl-[7px]">
      当前第1页，共1页
      <button aria-label="首页" className="ml-3 h-4 text-[#bbb]"><Pager d="M1 1V13M10 1L3 7L10 13" /></button>
      <button aria-label="上一页" className="ml-5 h-4 text-[#bbb]"><Pager d="M7 1L1 7L7 13M11 1L5 7L11 13" /></button>
      <input aria-label="页码" defaultValue="1" className="ml-[10px] h-[25px] w-[60px] rounded-[3px] border border-[#ccc] pl-[3px] outline-none" />
      <button aria-label="下一页" className="ml-2 h-4 text-[#bbb]"><Pager d="M1 1L7 7L1 13M5 1L11 7L5 13" /></button>
      <button aria-label="末页" className="ml-[18px] h-4 text-[#bbb]"><Pager d="M1 1L8 7L1 13M10 1V13" /></button>
      <svg viewBox="0 0 9 9" className="ml-auto mr-px mt-auto size-[9px]" aria-hidden="true">
        <path d="M7 1h2v2h-2zM4 4h2v2h-2zM7 4h2v2h-2zM1 7h2v2h-2zM4 7h2v2h-2zM7 7h2v2h-2z" fill="#999" />
      </svg>
    </footer>
  </section>
);

const RangeDialog = () => (
  <section role="dialog" aria-label="设置报表范围" className="absolute left-[519px] top-[559px] flex h-[490px] w-[417px] flex-col border border-[#bfc0c2] bg-[#fdfdfd]">
    <div className="flex h-[39px] shrink-0 items-center justify-between pl-[11px] pr-[9px]">
      <h2 className="text-sm">设置报表范围</h2>
      <button aria-label="关闭"><X className="size-[18px] text-[#888]" strokeWidth={1.3} /></button>
    </div>
    <div className="mx-[11px] flex flex-1 flex-col">
      <div className="flex h-[25px] items-end gap-[3px]">
        <button className="h-[25px] w-[62px] rounded-t-[3px] border border-b-0 border-[#c4c6c9] bg-white text-[#1a73e8]">绘图输入</button>
        <button className="h-[21px] w-[60px] rounded-t-[2px] bg-[#dedede] text-[#444]">表格算量</button>
      </div>
      <div className="flex-1 border-2 border-[#c4c6cb] bg-white pl-3 pt-[6px]">
        <div className="flex items-center gap-2">
          <svg viewBox="0 0 4 6" className="h-[6px] w-1" aria-hidden="true"><path d="M0 0L4 3L0 6Z" fill="#777" /></svg>
          <Check label="基础层" checked />
          <span className="-ml-px leading-[18px]">基础层</span>
        </div>
      </div>
    </div>
    <fieldset className="mx-[11px] mt-[6px] h-[68px] rounded-[3px] border border-[#ccc] pl-[21px]">
      <legend className="-ml-3 leading-[18px]">钢筋类型</legend>
      <div className="flex pt-[11px] leading-[18px]">
        <span className="w-[119px]"><Check label="直筋" checked showLabel /></span>
        <span className="w-[119px]"><Check label="箍筋" checked showLabel /></span>
        <Check label="措施筋" checked showLabel />
      </div>
    </fieldset>
    <div className="flex h-[43px] shrink-0 justify-end gap-[6px] bg-linear-to-b from-[#fdfdfd] to-[#e0e0e0] pr-[11px] pt-[6px]">
      <button className="h-[26px] w-20 rounded-[3px] bg-[#2b7fe2] text-white">确定</button>
      <button className="h-[26px] w-20 rounded-[3px] border border-[#ccc] bg-white">取消</button>
    </div>
  </section>
);

const ViewTools = () => (
  <div className="absolute right-0 top-0 flex h-[246px] w-[33px] flex-col items-center rounded-[3px] border border-[#d0d0d0] bg-white pt-3">
    <button aria-label="动态观察"><Small name="orbit" size={20} /></button>
    <button aria-label="2D" className="mt-[10px] flex size-[19px] items-end justify-center rounded-[2px] border border-[#4c5468] text-[8px] font-bold leading-[12px] text-[#1a73e8]">2D</button>
    <button aria-label="线框" className="mt-[10px]"><Small name="cube" size={20} /></button>
    <Caret className="mt-2 w-[7px]" />
    <button aria-label="实体" className="mt-[6px]"><Small name="cubeOn" size={20} /></button>
    <Caret className="mt-2 w-[7px]" />
    <button aria-label="全屏" className="mt-[6px]"><Small name="frame" size={20} /></button>
    <button aria-label="局部三维" className="mt-[9px]"><Small name="cubeDash" size={20} /></button>
    <i className="mt-[7px] h-px w-[23px] bg-[#555]" />
    <button aria-label="显示设置" className="mt-[6px]"><Small name="listEye" size={20} /></button>
  </div>
);

const Canvas = () => (
  <main className="relative flex min-w-0 flex-1 flex-col bg-black">
    <Scene />
    <ReportWindow />
    <RangeDialog />
    <ViewTools />
    <svg className="pointer-events-none absolute inset-0 size-full overflow-visible" aria-hidden="true">
      <path d="M391 224L399 214L401 218L760 79L995 -13L760 82L403 222L404 227Z" fill="#ff2314" />
    </svg>
    <div className="relative mt-auto flex h-[27px] items-center justify-center bg-[#2a2a2a] text-white">
      <div className="relative flex items-center gap-[5px]">
        <div className="absolute -left-[11px] bottom-[27px] flex h-[29px] w-[277px] items-center justify-between rounded-[3px] bg-[#0091ff] pl-[7px] pr-[19px]">
          点击图标可调节提示信息位置~
          <button className="text-[#8fcdff]">不再提示</button>
          <svg viewBox="0 0 10 6" className="absolute left-[15px] top-[29px] h-[6px] w-[10px]" aria-hidden="true"><path d="M0 0H10L5 6Z" fill="#0091ff" /></svg>
        </div>
        <svg viewBox="0 0 14 14" className="size-[14px]" fill="none" stroke="#fff" aria-hidden="true">
          <path d="M13 1L8 6M8 2V6H12M1 13L6 8M2 8H6V12" />
        </svg>
        按鼠标左键指定第一个角点，或拾取构件图元
      </div>
    </div>
  </main>
);

const Splitter = ({ side }: { side: "left" | "right" }) => (
  <div className="flex w-1 shrink-0 flex-col bg-white pt-[547px]">
    <button aria-label={side === "left" ? "收起左栏" : "收起右栏"} className="flex h-[100px] items-center bg-[#5f6b7b]">
      <svg viewBox="0 0 4 6" className={clsx("h-[6px] w-1", side === "right" && "rotate-180")}><path d="M4 0L0 3L4 6Z" fill="#ccc" /></svg>
    </button>
  </div>
);

const layerTree: [string, string[]][] = [
  ["施工段", ["土方工程", "基础工程", "主体结构", "二次结构", "装饰装修", "其它土建", "钢筋工程"]],
  ["轴线", ["轴网", "辅助轴线"]],
  ["柱", ["柱", "构造柱", "砌体柱", "约束边缘非阴..."]],
  ["墙", ["剪力墙", "人防门框墙", "砌体墙", "砌体加筋", "保温墙", "暗梁", "墙垛", "幕墙"]],
  ["门窗洞", ["门", "窗", "门联窗", "墙洞", "带形窗", "带形洞", "飘窗", "老虎窗", "过梁", "壁龛"]],
  ["梁", ["梁", "连梁", "圈梁"]],
  ["板", ["现浇板", "螺旋板", "坡道", "柱帽", "板洞", "板受力筋", "板负筋", "楼层板带", "板加腋"]],
];

type LayerRow = { label: string; level: number; last: boolean; muted: boolean };

const layerRows: LayerRow[] = [
  { label: "所有构件", level: 0, last: false, muted: false },
  ...layerTree.flatMap(([title, items]) => [
    { label: title, level: 1, last: false, muted: title === "轴线" },
    ...items.map((label, i) => ({ label, level: 2, last: i === items.length - 1, muted: title === "轴线" })),
  ]),
];

const LayerCell = ({ row }: { row: LayerRow }) => (
  <span className="flex h-5 items-center whitespace-nowrap">
    {row.level > 0 ? <i className="h-full w-2 shrink-0 border-r border-[#e0e0e0]" /> : null}
    {row.level === 1 ? <i className="h-px w-[3px] shrink-0 bg-[#e0e0e0]" /> : null}
    {row.level === 2 ? (
      <>
        <i className={clsx("w-[10px] shrink-0 self-start border-r border-[#e0e0e0]", row.last ? "h-[10px]" : "h-full")} />
        <i className="mr-[6px] h-px w-4 shrink-0 bg-[#e0e0e0]" />
      </>
    ) : (
      <span className={clsx("mr-[6px]", row.level === 0 && "ml-px")}><Expander open /></span>
    )}
    {row.label}
  </span>
);

const DisplayPanel = () => (
  <aside className="flex w-[229px] shrink-0 flex-col overflow-hidden border border-r-0 border-[#c4c6cb] bg-white">
    <div className="h-3 shrink-0 border-b border-[#d8d8d8] bg-[#e6e6e6]" />
    <h2 className="flex h-[22px] shrink-0 items-center border-b border-[#dcdcdc] bg-[#f2f2f2] pl-2 text-[#808080]">显示设置</h2>
    <div className="flex h-[26px] shrink-0 items-end gap-[3px] border-b border-[#ccc] pl-[2px]">
      <button className="-mb-px h-6 w-[62px] rounded-t-[3px] border border-b-0 border-[#c4c6c9] bg-white text-[#1a73e8]">图元显示</button>
      <button className="h-[21px] w-[60px] rounded-t-[2px] bg-[#dedede] text-[#555]">楼层显示</button>
    </div>
    <table className="ml-[2px] mt-[2px] w-[257px] shrink-0 table-fixed border-collapse">
      <colgroup><col className="w-[131px]" /><col className="w-[63px]" /><col className="w-[63px]" /></colgroup>
      <thead>
        <tr className="h-[21px] leading-4">
          <th scope="col" className="border border-[#dcdcdc] p-0 text-center font-normal">图层构件</th>
          <th scope="col" className="border border-[#6fb0f5] bg-[#7db8f8] p-0 text-center font-bold text-white">显示图元</th>
          <th scope="col" className="border border-[#dcdcdc] p-0 text-center font-normal">显示名称</th>
        </tr>
      </thead>
      <tbody>
        {layerRows.map((r, i) => (
          <tr key={i} className="h-[21px] leading-none">
            <td className="border border-l-2 border-[#dcdcdc] p-0"><LayerCell row={r} /></td>
            <td className={clsx("p-0 text-center", i === 0 ? "border-2 border-[#808080]" : "border border-[#dcdcdc]")}><Check label={`显示图元 ${r.label}`} checked /></td>
            <td className="border border-[#dcdcdc] p-0 text-center"><Check label={`显示名称 ${r.label}`} muted={r.muted} /></td>
          </tr>
        ))}
      </tbody>
    </table>
    <button className="ml-auto -mr-[22px] mt-1 h-[26px] w-[71px] shrink-0 rounded-[3px] border border-[#c4c6c9]">恢复默认</button>
  </aside>
);

const tools: [string, string, boolean][] = [
  ["正交", "angle", false], ["框选", "boxSel", true], ["交点", "cross", false], ["角度", "slope", true], ["偏移", "plusBox", true], ["图层", "layers", false], ["弧线", "arc", false],
];

const StatusBar = () => (
  <div className="flex h-[31px] shrink-0 items-center whitespace-nowrap bg-[#fcfcfc] pl-[2px]">
    <span className="w-[90px]">层高： 3</span>
    <span className="w-[140px]">标高： -3~0</span>
    <span className="w-[110px]">选中图元：0</span>
    <span className="w-[110px]">隐藏图元：0</span>
    <div className="flex gap-1">
      {tools.map(([label, icon, menuOn]) => (
        <button
          key={label}
          aria-label={label}
          className={clsx("flex h-[25px] items-center justify-center gap-[5px] rounded-[3px] border", menuOn ? "w-9" : "w-[25px]", icon === "boxSel" ? "border-[#2a7de1] bg-[#d5e6fb]" : "border-[#999]")}
        >
          <Small name={icon} size={16} />
          {menuOn ? <Caret /> : null}
        </button>
      ))}
    </div>
  </div>
);

const Task = ({ children, on }: { children: ReactNode; on?: boolean }) => (
  <button className={clsx("grid h-7 w-[37px] shrink-0 place-items-center", on && "bg-[#eef5f9]")}>{children}</button>
);

const Taskbar = () => (
  <footer className="flex h-7 shrink-0 overflow-hidden bg-linear-to-r from-[#d3e2ec] via-[#d5e9ea] to-[#d0e0e8]">
    <button aria-label="开始" className="w-9 pl-[10px] pt-4">
      <svg viewBox="0 0 16 16" className="size-4" aria-hidden="true"><path d="M0 2L7 1V7H0ZM8 1L16 0V7H8ZM0 8H7V15L0 14ZM8 8H16V16L8 15Z" fill="#000" /></svg>
    </button>
    <button aria-label="搜索" className="w-[38px] pl-[13px] pt-4"><Search className="size-[14px] -scale-x-100 text-black" strokeWidth={2.5} /></button>
    <Task>
      <svg viewBox="0 0 16 14" className="h-[14px] w-4"><path d="M1 1H6L8 3H15V12H1Z" fill="#f5b73a" /><path d="M1 5H15V12H1Z" fill="#ffd766" /><path d="M4 8H12V13H10V10H6V13H4Z" fill="#3a8fd8" /></svg>
    </Task>
    <Task>
      <svg viewBox="0 0 16 16" className="size-4"><rect width="16" height="16" rx="1" fill="#1c4a8c" /><path d="M2 12V6H6V12M4 6V12M8 12V4H14V12M11 4V12M8 8H14" fill="none" stroke="#cfe1fb" /></svg>
    </Task>
    <Task>
      <svg viewBox="0 0 18 14" className="h-[14px] w-[18px]"><ellipse cx="7" cy="5" rx="6" ry="5" fill="#2dc45c" /><ellipse cx="12" cy="9" rx="5" ry="4" fill="#eef2f0" stroke="#cbd5d0" /><path d="M4 4h1M8 4h1" stroke="#0a5c28" /></svg>
    </Task>
    <Task>
      <svg viewBox="0 0 16 16" className="size-4"><rect width="16" height="16" rx="2" fill="#1c8ef0" /><path d="M3 3H13V13H3ZM5 6H11M5 9H9M10 10H12V13" fill="none" stroke="#fff" strokeWidth="1.500" /></svg>
    </Task>
    <Task>
      <svg viewBox="0 0 16 16" className="size-4" fill="none" strokeWidth="4"><path d="M8 2A6 6 0 0 1 14 8" stroke="#f7b500" /><path d="M14 8A6 6 0 0 1 8 14" stroke="#e6399b" /><path d="M8 14A6 6 0 0 1 2 8" stroke="#7a4de8" /><path d="M2 8A6 6 0 0 1 8 2" stroke="#2dc45c" /><circle cx="8" cy="8" r="3" fill="#fff" stroke="none" /></svg>
    </Task>
    <Task>
      <svg viewBox="0 0 16 16" className="size-4"><rect width="16" height="16" rx="3" fill="#f7a823" /><path d="M4 9A3 3 0 0 1 5 4A4 4 0 0 1 12 5A2 2 0 0 1 12 9ZM6 9V12H10V9M8 6V13" fill="none" stroke="#fff" strokeWidth="1.500" /></svg>
    </Task>
    <Task>
      <svg viewBox="0 0 16 12" className="h-3 w-4"><path d="M1 2H11L13 2M1 1L4 10L8 4L11 10L15 1M4 5H12" fill="none" stroke="#e8281e" strokeWidth="2" /></svg>
    </Task>
    <Task on>
      <svg viewBox="0 0 16 16" className="size-4"><rect width="16" height="16" rx="2" fill="#cbe6fa" /><path d="M2 2H14V5H10V14H7V5H2Z" fill="#0a8dff" /></svg>
    </Task>
    <Task><span className="size-[15px] bg-[#5fb0dc] text-center text-xs leading-[15px] text-white">预</span></Task>
    <div className="ml-auto flex items-start gap-[7px] pr-[85px] pt-4 text-black">
      <span className="relative leading-[16px]">桌面<span className="absolute -top-[19px] left-8 text-sm text-[#5a63b0]">»</span></span>
      <ChevronUp className="ml-4 size-4" />
      <svg viewBox="0 0 18 14" className="h-[14px] w-[18px]"><path d="M2 1V4M5 1V4M1 4H6V7L4 9V12" fill="none" stroke="#000" /><path d="M7 4H16V12H7Z" /></svg>
      <Wifi className="size-4" />
      <span className="flex"><Volume1 className="size-[14px]" /><i className="mt-1 size-2 rounded-full bg-[#e02020]" /></span>
      <span className="grid size-[15px] place-items-center rounded-full border border-[#888]"><X className="size-[9px] text-[#777]" strokeWidth={3} /></span>
      <span className="-mt-px bg-white"><Maximize2 className="size-4" strokeWidth={1.5} /></span>
    </div>
    <time className="-ml-[53px] w-[53px] pt-[5px] text-xs leading-4 text-black">18:02</time>
  </footer>
);

export default function App() {
  return (
    <div className="flex h-screen w-full flex-col overflow-hidden bg-white font-['Noto_Sans','Noto_Sans_CJK_SC',sans-serif] text-xs leading-[18px] text-[#333]">
      <Header />
      <Ribbon />
      <div className="flex h-[26px] shrink-0 items-center gap-[3px] bg-[#f1f1f1] pl-[2px]">
        <Combo label="楼层" value="基础层" className="h-[22px] w-[99px]" />
        <Combo label="类别" value="其它" className="h-[22px] w-[99px]" />
        <Combo label="构件类型" value="台阶" className="h-[22px] w-[99px]" />
        <Combo label="构件" value="TAIJ-1" className="h-[22px] w-[99px]" />
      </div>
      <div className="flex min-h-0 flex-1">
        <NavPanel />
        <Components />
        <Splitter side="left" />
        <Canvas />
        <Splitter side="right" />
        <DisplayPanel />
      </div>
      <StatusBar />
      <Taskbar />
    </div>
  );
}
